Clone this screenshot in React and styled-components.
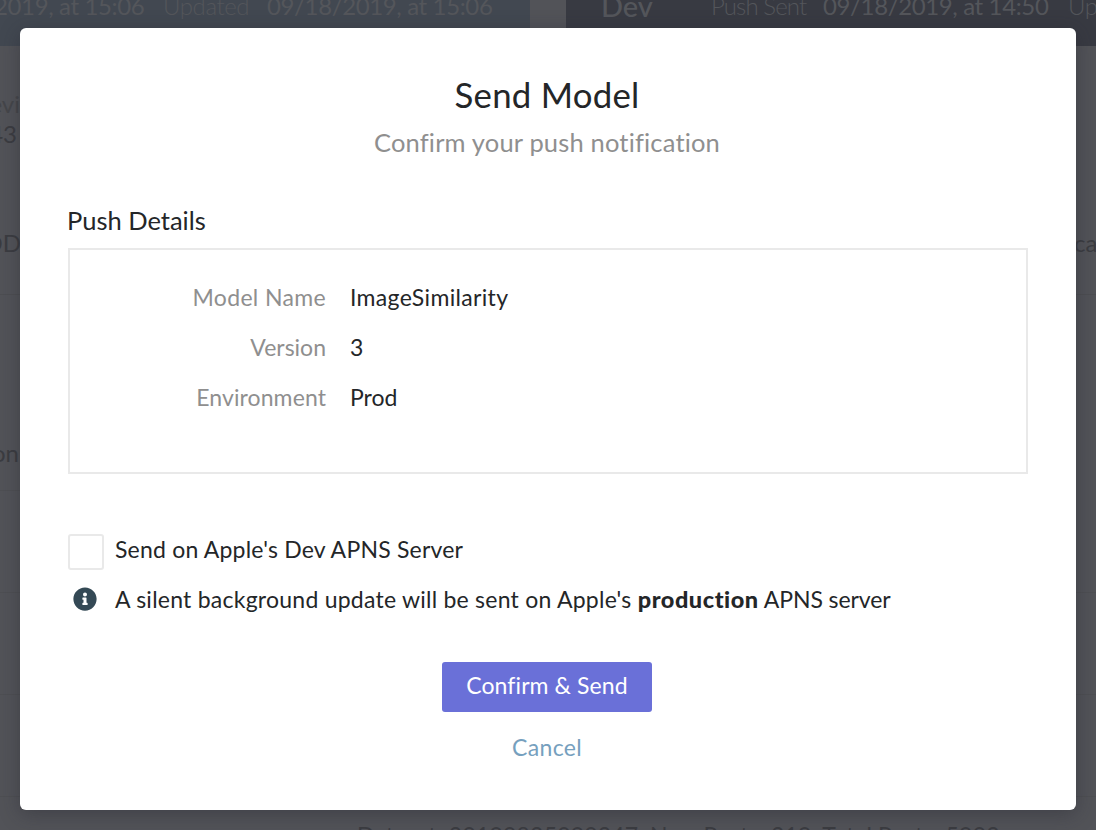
import React from "react";
import styled, { createGlobalStyle } from "styled-components";

const Global = createGlobalStyle`
  *, *::before, *::after { box-sizing: border-box; }
  body { margin: 0; background: #525358; font-family: Lato, "Liberation Sans", sans-serif; color: #242628; }
`;

const Stage = styled.div`
  position: relative;
  width: 1096px;
  height: 830px;
  overflow: hidden;
  background: #525358;
`;

const Backdrop = styled.div`
  display: flex;
  gap: 36px;
  height: 830px;
  color: #3b3c41;
`;

const Column = styled.section`
  flex: 0 0 530px;
  min-width: 0;
  white-space: nowrap;
`;

const ColumnHeader = styled.header`
  display: flex;
  align-items: flex-start;
  height: 46px;
  padding-left: ${(p) => p.$indent}px;
  background: ${(p) => p.$tone};
  color: #54565b;
  line-height: 24px;
  overflow: hidden;
`;

const HeaderText = styled.span`
  flex: none;
  width: ${(p) => p.$width}px;
  margin: -6px 0 0 ${(p) => p.$shift || 0}px;
  font-size: ${(p) => p.$size || 24}px;
  font-weight: ${(p) => p.$weight || 400};
  letter-spacing: ${(p) => p.$track || 0}px;
`;

const HeaderDate = styled(HeaderText)`
  letter-spacing: -0.37px;
`;

const HeaderLabel = styled(HeaderText)`
  font-weight: 300;
`;

const Summary = styled.div`
  height: 249px;
  padding-top: 45px;
  border-bottom: 1px solid #4d4e52;
`;

const SummaryLine = styled.div`
  height: ${(p) => p.$height}px;
  padding-left: ${(p) => p.$indent || 0}px;
  color: ${(p) => p.$color || "inherit"};
  font-size: 24px;
  line-height: 26px;
`;

const Clip = styled.div`
  display: flex;
  justify-content: flex-end;
  width: ${(p) => p.$end || 20}px;
`;

const Band = styled.div`
  height: ${(p) => p.$height}px;
  padding-top: ${(p) => p.$top || 0}px;
  border-bottom: 1px solid #4e4f53;
  font-size: 24px;
  line-height: 26px;
`;

const DatasetLine = styled.div`
  padding: 26px 0 0 357px;
  font-size: 23px;
  line-height: 24px;
  letter-spacing: 0.2px;
`;

const Dialog = styled.main`
  position: absolute;
  top: 28px;
  left: 20px;
  display: flex;
  flex-direction: column;
  width: 1056px;
  height: 782px;
  padding: 44px 48px 0;
  border-radius: 6px;
  background: #fff;
  box-shadow: 0 4px 20px rgba(35, 36, 46, 0.4);
`;

const Title = styled.h1`
  margin: 0;
  padding-right: 2px;
  font-size: 34.8px;
  font-weight: 400;
  line-height: 45px;
  letter-spacing: 0.25px;
  text-align: center;
`;

const Subtitle = styled.p`
  margin: 7px 0 0;
  padding-right: 2px;
  color: #8f8f8f;
  font-size: 25.5px;
  line-height: 36px;
  letter-spacing: 0.17px;
  text-align: center;
`;

const SectionTitle = styled.h2`
  margin: 43px 0 0 -1px;
  font-size: 25.5px;
  font-weight: 400;
  line-height: 34px;
`;

const Details = styled.dl`
  display: grid;
  grid-template-columns: 256px 1fr;
  grid-auto-rows: 50px;
  column-gap: 24px;
  height: 226px;
  margin: 11px 0 0;
  padding-top: 22px;
  border: 2px solid #e9e9e9;
  font-size: 23px;
  line-height: 50px;
`;

const Term = styled.dt`
  color: #8f8f8f;
  text-align: right;
  letter-spacing: ${(p) => p.$track || 0}px;
`;

const Value = styled.dd`
  margin: 0;
  letter-spacing: ${(p) => p.$track || 0}px;
`;

const Options = styled.div`
  display: grid;
  grid-template-columns: 36px 1fr;
  column-gap: 11px;
  grid-template-rows: 36px 50px;
  margin-top: 60px;
  font-size: 23px;
`;

const Checkbox = styled.button`
  width: 36px;
  height: 36px;
  padding: 0;
  border: 2px solid #e9e9e9;
  border-radius: 3px;
  background: #fff;
`;

const OptionText = styled.span`
  line-height: 32px;
  margin-top: ${(p) => p.$top || 0}px;
  letter-spacing: ${(p) => p.$track || 0}px;
  white-space: nowrap;
`;

const Strong = styled.b`
  font-weight: 900;
  font-size: 23.5px;
  letter-spacing: 0.55px;
`;

const Tail = styled.span`
  letter-spacing: -0.1px;
`;

const InfoIcon = styled.svg`
  width: 24px;
  height: 24px;
  margin: 17px 0 0 5px;
`;

const Actions = styled.div`
  display: flex;
  flex-direction: column;
  align-items: center;
  margin-top: 42px;
  padding-right: 2px;
`;

const PrimaryButton = styled.button`
  width: 210px;
  height: 50px;
  padding: 0 0 4px;
  border: 0;
  border-radius: 3px;
  background: #6a70d8;
  color: #fff;
  font: 400 23px/46px Lato, sans-serif;
  letter-spacing: 0.1px;
`;

const CancelButton = styled.button`
  margin-top: 19px;
  padding: 0;
  border: 0;
  background: none;
  color: #76a0be;
  font: 400 23px/32px Lato, sans-serif;
  letter-spacing: 0.35px;
`;

export default function App() {
  return (
    <Stage>
      <Global />
      <Backdrop aria-hidden="true">
        <Column>
          <ColumnHeader $tone="#424851" $indent={0}>
            <HeaderDate $width={169} $shift={-6}>2019, at 15:06</HeaderDate>
            <HeaderLabel $width={104} $track={-0.4}>Updated</HeaderLabel>
            <HeaderDate $width={240}>09/18/2019, at 15:06</HeaderDate>
          </ColumnHeader>
          <Summary>
            <SummaryLine $height={30} $color="#45464a"><Clip>Previ</Clip></SummaryLine>
            <SummaryLine $height={109}><Clip $end={17}>43</Clip></SummaryLine>
            <SummaryLine $height={26}><Clip $end={21}>COD</Clip></SummaryLine>
          </Summary>
          <Band $height={196} $top={145}><Clip $end={19}>on</Clip></Band>
          <Band $height={102} />
          <Band $height={102} />
          <Band $height={102} />
          <DatasetLine>Dataset: 20190825090247, New Posts: 219, Total Posts: 5902</DatasetLine>
        </Column>
        <Column>
          <ColumnHeader $tone="#383a42" $indent={35}>
            <HeaderText $width={110} $size={29} $weight={500}>Dev</HeaderText>
            <HeaderLabel $width={112} $track={-0.9}>Push Sent</HeaderLabel>
            <HeaderDate $width={245}>09/18/2019, at 14:50</HeaderDate>
            <HeaderLabel $width={104} $track={-0.4}>Updated</HeaderLabel>
          </ColumnHeader>
          <Summary>
            <SummaryLine $height={139} />
            <SummaryLine $height={26} $indent={508}>ca</SummaryLine>
          </Summary>
          <Band $height={298} />
          <Band $height={102} />
          <Band $height={102} />
        </Column>
      </Backdrop>

      <Dialog role="dialog" aria-labelledby="send-model-title">
        <Title id="send-model-title">Send Model</Title>
        <Subtitle>Confirm your push notification</Subtitle>
        <SectionTitle>Push Details</SectionTitle>
        <Details>
          <Term $track={0.35}>Model Name</Term>
          <Value $track={0.33}>ImageSimilarity</Value>
          <Term>Version</Term>
          <Value>3</Value>
          <Term $track={0.1}>Environment</Term>
          <Value>Prod</Value>
        </Details>
        <Options>
          <Checkbox role="checkbox" aria-checked="false" aria-label="Send on Apple's Dev APNS Server" />
          <OptionText $top={-1} $track={0.2}>Send on Apple's Dev APNS Server</OptionText>
          <InfoIcon viewBox="0 0 512 512" aria-hidden="true">
            <path
              fill="#344955"
              d="M256 8C119.043 8 8 119.083 8 256c0 136.997 111.043 248 248 248s248-111.003 248-248C504 119.083 392.957 8 256 8zm0 110c23.196 0 42 18.804 42 42s-18.804 42-42 42-42-18.804-42-42 18.804-42 42-42zm56 254c0 6.627-5.373 12-12 12h-88c-6.627 0-12-5.373-12-12v-24c0-6.627 5.373-12 12-12h12v-64h-12c-6.627 0-12-5.373-12-12v-24c0-6.627 5.373-12 12-12h64c6.627 0 12 5.373 12 12v100h12c6.627 0 12 5.373 12 12v24z"
            />
          </InfoIcon>
          <OptionText $top={13} $track={0.24}>
            A silent background update will be sent on Apple's <Strong>production</Strong>
            <Tail> APNS server</Tail>
          </OptionText>
        </Options>
        <Actions>
          <PrimaryButton>Confirm &amp; Send</PrimaryButton>
          <CancelButton>Cancel</CancelButton>
        </Actions>
      </Dialog>
    </Stage>
  );
}
